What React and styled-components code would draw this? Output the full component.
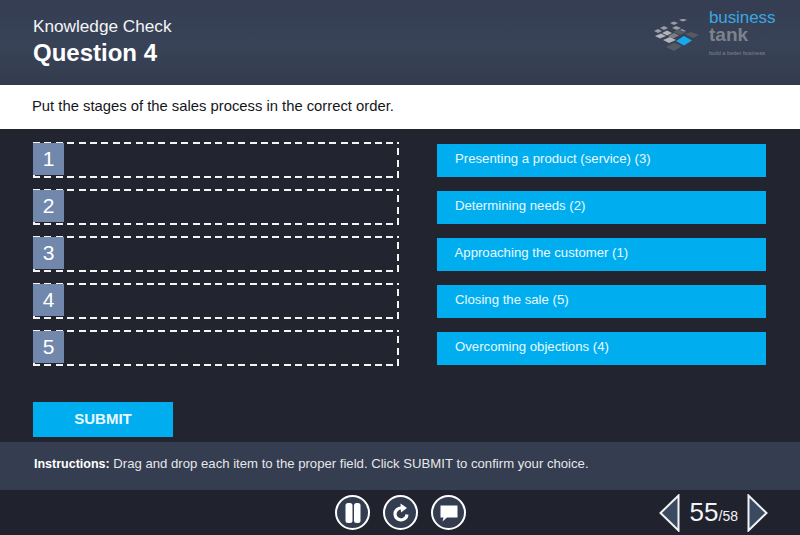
import React from 'react';
import styled, { createGlobalStyle } from 'styled-components';

const Global = createGlobalStyle`
  html, body { margin: 0; padding: 0; background: #22242f; }
  body { font-family: "Liberation Sans", Arial, sans-serif; }
`;

const Slide = styled.div`
  width: 800px;
  height: 535px;
  display: flex;
  flex-direction: column;
  overflow: hidden;
  background: #22242f;
  color: #fff;
`;

const Header = styled.header`
  height: 85px;
  flex: none;
  box-sizing: border-box;
  padding: 16px 25px 0 33px;
  display: flex;
  justify-content: space-between;
  background: linear-gradient(#343d51, #394357 50%, #333c4f);
`;

const Eyebrow = styled.div`
  font-size: 17.2px;
  line-height: 21px;
  color: #f4f5f7;
`;

const Title = styled.h1`
  margin: 2px 0 0;
  font-size: 24px;
  line-height: 28px;
  font-weight: 700;
`;

const Logo = styled.div`
  display: flex;
  margin-top: -7px;
`;

const LogoMarkSlot = styled.div`
  margin-top: 10px;
  filter: blur(0.4px);
`;

const LogoText = styled.div`
  margin-left: 9px;
  width: 66px;
`;

const LogoWord = styled.div`
  font-size: 17px;
  line-height: 17px;
  color: #3aa7e0;
  letter-spacing: -0.1px;
`;

const LogoTank = styled.div`
  font-size: 19px;
  line-height: 17px;
  font-weight: 700;
  color: #7d828c;
`;

const LogoTag = styled.div`
  font-size: 5.6px;
  line-height: 6px;
  margin-top: 7px;
  color: #80858f;
  white-space: nowrap;
`;

const Prompt = styled.div`
  height: 44px;
  flex: none;
  box-sizing: border-box;
  padding: 0 0 3px 32px;
  display: flex;
  align-items: center;
  background: #fff;
  color: #15161a;
  font-size: 14.8px;
`;

const Body = styled.main`
  flex: 1;
  box-sizing: border-box;
  padding: 13px 34px 5px 33px;
  display: flex;
  flex-direction: column;
`;

const Columns = styled.div`
  display: grid;
  grid-template-columns: 366px 329px;
  column-gap: 38px;
`;

const SlotList = styled.div`
  display: flex;
  flex-direction: column;
  gap: 11.5px;
`;

const Slot = styled.div`
  height: 35.5px;
  background-color: transparent;
  background-image:
    repeating-linear-gradient(90deg, #f4f4f4 0 7px, transparent 7px 11.4px),
    repeating-linear-gradient(90deg, #f4f4f4 0 7px, transparent 7px 11.4px),
    repeating-linear-gradient(0deg, #f4f4f4 0 7px, transparent 7px 11.4px),
    repeating-linear-gradient(0deg, #f4f4f4 0 7px, transparent 7px 11.4px);
  background-size: 100% 2px, 100% 2px, 2px 100%, 2px 100%;
  background-position: 0 0, 0 100%, 0 0, 100% 0;
  background-repeat: no-repeat;
`;

const SlotNumber = styled.div`
  width: 31px;
  height: 32px;
  margin-top: 1px;
  display: flex;
  align-items: center;
  justify-content: center;
  background: #7188ac;
  font-size: 21px;
  color: #fff;
`;

const ItemList = styled.div`
  display: flex;
  flex-direction: column;
  gap: 14px;
  padding-top: 2px;
`;

const Item = styled.div`
  height: 33px;
  box-sizing: border-box;
  padding: 6px 0 0 ${props => props.$indent}px;
  background: #00aeef;
  font-size: 13.2px;
  line-height: 17px;
  color: #e9f8ff;
`;

const SubmitButton = styled.button`
  width: 140px;
  height: 35px;
  margin-top: 36.5px;
  padding: 0 0 3px;
  border: none;
  background: #00aeef;
  color: #e9f8ff;
  font-family: inherit;
  font-size: 15px;
  font-weight: 700;
`;

const Instructions = styled.div`
  height: 48px;
  flex: none;
  box-sizing: border-box;
  padding-left: 34px;
  background: #353d50;
  font-size: 13.15px;
  line-height: 44px;
  color: #e6e7ea;

  b { font-size: 12.5px; color: #fff; }
`;

const Footer = styled.footer`
  height: 45px;
  flex: none;
  display: grid;
  grid-template-columns: 335px 1fr auto;
  align-items: center;
  padding-right: 32px;
  background: #20222d;
`;

const Controls = styled.div`
  grid-column: 2;
  display: flex;
  gap: 13px;
`;

const RoundButton = styled.button`
  width: 35px;
  height: 35px;
  padding: 0;
  border: 2px solid #fff;
  border-radius: 50%;
  background: #343d50;
  display: flex;
  align-items: center;
  justify-content: center;
`;

const Pager = styled.div`
  grid-column: 3;
  display: flex;
  align-items: center;
`;

const PageNum = styled.div`
  margin: 0 9px 0 10px;
  font-size: 26px;
  color: #f3f4f6;
  white-space: nowrap;

  small { font-size: 14px; }
`;

const LogoMark = () => (
  <svg width="46" height="36" viewBox="0 0 46 36">
    <g fill="#9a9da4">
      <path d="M25 1l4-1.500 4 1.500-4 1.500z" />
      <path d="M16 4l4-1.500 4 1.500-4 2z" />
      <path d="M6 9l4-2 4 2-4 2z" />
      <path d="M18 9l4-2 5 2-4 2z" />
      <path d="M0 12l4-2 4 2-4 2z" />
      <path d="M24 12l4-2 4 2-4 2z" />
    </g>
    <g fill="#b2b4ba">
      <path d="M8 14l5-2.500 5 2.500-5 2.500z" />
      <path d="M1 17l6-2.500 5 2.500-6 2.500z" />
      <path d="M9 21l7-3 6 3-7 3z" />
    </g>
    <g fill="#565a63">
      <path d="M19 13l6-2.500 7 2.500-6 3z" />
      <path d="M31 15l6-2 8 3-6 3z" />
      <path d="M12 28l8-4 8 3-8 5z" />
    </g>
    <path d="M14 17l6-3 5 2.500-6 3z" fill="#7b7e86" />
    <path d="M22 22l8-5 8 4.500-8 5z" fill="#16a9ec" />
  </svg>
);

const PauseIcon = () => (
  <svg width="20" height="20" viewBox="0 0 20 20" fill="#fff">
    <rect x="2.500" y="0" width="7" height="20" rx="2.500" />
    <rect x="11" y="0" width="6.500" height="20" rx="2.500" />
  </svg>
);

const ReplayIcon = () => (
  <svg width="20" height="20" viewBox="0 0 20 20" fill="none">
    <path d="M16 11.500a6 6 0 1 1-5.500-6.500" stroke="#fff" strokeWidth="3.200" />
    <path d="M9.500 0.500l6.500 4.500-6 4.500z" fill="#fff" />
  </svg>
);

const ChatIcon = () => (
  <svg width="20" height="20" viewBox="0 0 20 20" fill="#fff">
    <path d="M1.500 2.500h17v12H8l-4.500 4 1-4h-3z" />
  </svg>
);

const Arrow = ({ flip }) => (
  <svg width="21" height="38" viewBox="0 0 21 38" style={flip ? { transform: 'scaleX(-1)' } : undefined}>
    <path d="M19.500 1.500v35L1.500 19z" fill="#3a4a60" stroke="#f2f3f5" strokeWidth="2" />
  </svg>
);

const items = [
  { label: 'Presenting a product (service) (3)', indent: 18 },
  { label: 'Determining needs (2)', indent: 18 },
  { label: 'Approaching the customer (1)', indent: 17.5 },
  { label: 'Closing the sale (5)', indent: 18 },
  { label: 'Overcoming objections (4)', indent: 18 },
];

export default function App() {
  return (
    <Slide>
      <Global />
      <Header>
        <div>
          <Eyebrow>Knowledge Check</Eyebrow>
          <Title>Question 4</Title>
        </div>
        <Logo>
          <LogoMarkSlot><LogoMark /></LogoMarkSlot>
          <LogoText>
            <LogoWord>business</LogoWord>
            <LogoTank>tank</LogoTank>
            <LogoTag>build a better business</LogoTag>
          </LogoText>
        </Logo>
      </Header>
      <Prompt>Put the stages of the sales process in the correct order.</Prompt>
      <Body>
        <Columns>
          <SlotList>
            {[1, 2, 3, 4, 5].map(n => (
              <Slot key={n}>
                <SlotNumber>{n}</SlotNumber>
              </Slot>
            ))}
          </SlotList>
          <ItemList>
            {items.map(item => <Item key={item.label} $indent={item.indent}>{item.label}</Item>)}
          </ItemList>
        </Columns>
        <SubmitButton>SUBMIT</SubmitButton>
      </Body>
      <Instructions>
        <b>Instructions:</b> Drag and drop each item to the proper field. Click SUBMIT to confirm your choice.
      </Instructions>
      <Footer>
        <Controls>
          <RoundButton><PauseIcon /></RoundButton>
          <RoundButton><ReplayIcon /></RoundButton>
          <RoundButton><ChatIcon /></RoundButton>
        </Controls>
        <Pager>
          <Arrow />
          <PageNum>55<small>/58</small></PageNum>
          <Arrow flip />
        </Pager>
      </Footer>
    </Slide>
  );
}
